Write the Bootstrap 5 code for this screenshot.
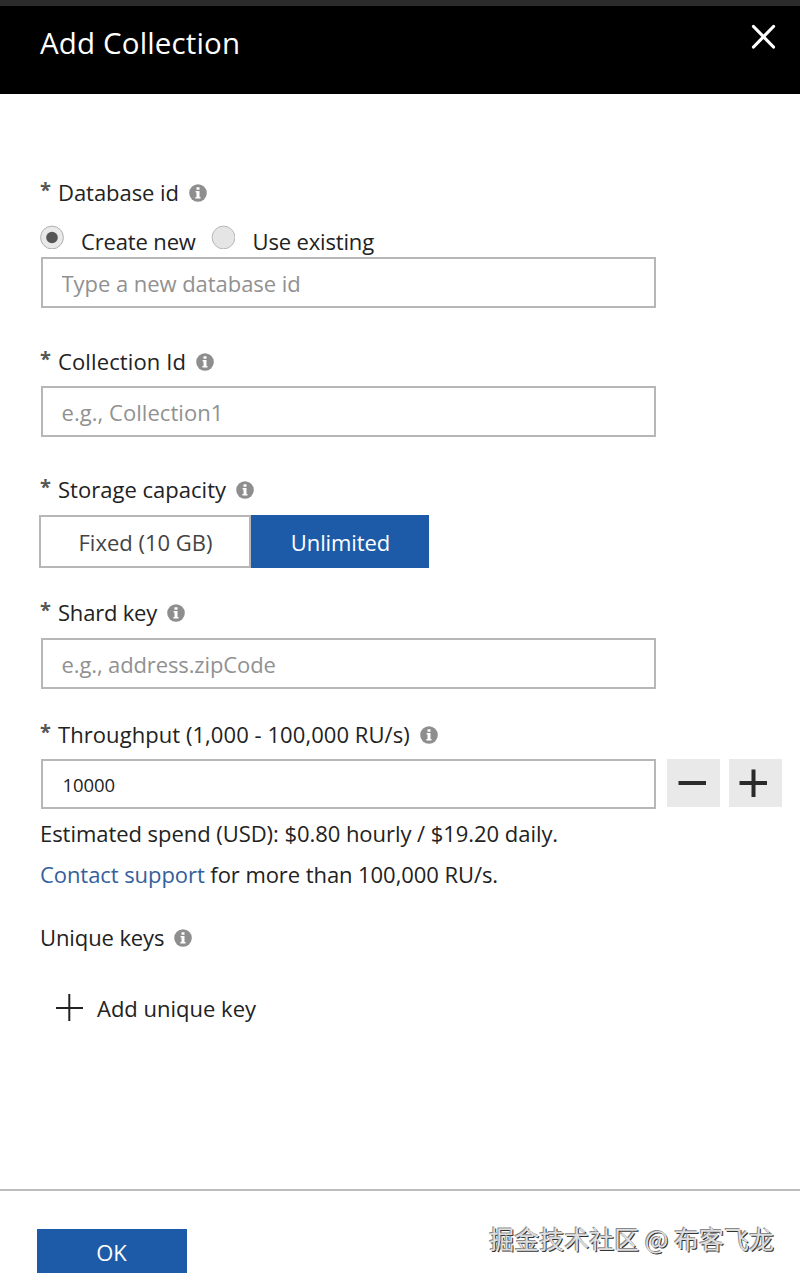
<!DOCTYPE html>
<html lang="en">
<head>
<meta charset="utf-8">
<meta name="viewport" content="width=device-width, initial-scale=1">
<title>Add Collection</title>
<link href="https://cdn.jsdelivr.net/npm/bootstrap@5.3.0/dist/css/bootstrap.min.css" rel="stylesheet">
<style>
  body { font-family: "Open Sans", "Noto Sans CJK SC", sans-serif; font-size: 22px; line-height: 30px; color: #222; letter-spacing: -.05px; }
  .blade { height: 1280px; overflow: hidden; }
  .blade-header { height: 94px; background: #000; border-top: 6px solid #2b2b2b; padding: 17px 24px 0 40px; }
  .blade-title { font-size: 29.5px; line-height: 40px; letter-spacing: .15px; }
  .blade-body { padding: 83px 18px 0 40px; height: 1095px; }
  .field-label { height: 30px; white-space: nowrap; }
  .req { width: 18px; font-size: 20px; font-weight: 700; color: #555; line-height: 30px; margin-top: -4px; }
  .info { width: 18px; height: 18px; margin: 2px 0 0 10px; }
  .field-input { width: 615px; height: 51px; margin-left: .5px; border: 2px solid #b7b7b7; border-radius: 0; padding: 0 19px 0; font-size: 22px; line-height: 30px; color: #222; letter-spacing: inherit; }
  .field-input::placeholder { color: #919191; opacity: 1; }
  .qty { height: 50px; font-size: 18.5px; padding: 0 20px; letter-spacing: -.1px; }
  .step-btn { width: 53px; height: 48px; background: #e9e9e9; border-radius: 0; }
  .radio-dot { width: 24px; height: 24px; margin-top: -1px; }
  .toggle-opt { height: 53px; border-radius: 0; font-size: 22px; line-height: 30px; padding: 1px 0 0 1px; letter-spacing: 0; }
  .opt-off { width: 212px; border: 2px solid #b7b7b7; color: #444; padding-top: 0; }
  .opt-on { width: 178px; background: #1d5ba8; color: #fff; border: 0; letter-spacing: -.09px; }
  .support-link { color: #34609c; text-decoration: none; }
  .blade-footer { border-top: 2px solid #bdbdbd; height: 91px; padding: 38px 26px 0 36.5px; }
  .ok-btn { width: 150px; height: 44px; background: #1d5ba8; color: #fff; border: 0; border-radius: 0; font-size: 22px; line-height: 30px; padding: 1px 0 0; }
  .watermark { font-size: 25px; line-height: 36px; letter-spacing: 0; color: #dedede; text-shadow: -1px -1px 0 #8a8a8a, 1px 1px 0 #333; font-family: "Noto Sans CJK SC", sans-serif; margin-top: -9px; white-space: nowrap; }
</style>
</head>
<body class="bg-white">
<svg class="d-none" xmlns="http://www.w3.org/2000/svg">
  <symbol id="i-info" viewBox="0 0 18 18">
    <circle cx="9" cy="9" r="8.8" fill="#8e8e8e"/>
    <path d="M7.5 3.2h3v2.5h-3zM6.6 7h3.9v6h1v1.6H6.4V13h1.1V8.6h-.9z" fill="#fff"/>
  </symbol>
</svg>
<div class="blade d-flex flex-column">
  <header class="blade-header d-flex justify-content-between align-items-start text-white">
    <h1 class="blade-title fw-normal m-0">Add Collection</h1>
    <button class="btn p-0 border-0 d-flex" aria-label="Close" type="button">
      <svg width="25" height="25" viewBox="0 0 25 25" style="margin-top:1px"><path d="M2.5 2.5 22.5 23M22.5 2.5 2.5 23" stroke="#fff" stroke-width="3.2" stroke-linecap="round"/></svg>
    </button>
  </header>

  <main class="blade-body">
    <div class="field-label d-flex align-items-center">
      <span class="req">*</span><span>Database id</span><svg class="info"><use href="#i-info"/></svg>
    </div>
    <div class="d-flex" style="margin-top:19px;height:31px">
      <svg class="radio-dot" viewBox="0 0 24 24"><circle cx="12" cy="12.5" r="11.4" fill="#e9e9e9" stroke="#b0b0b0"/><circle cx="12" cy="12.5" r="5.8" fill="#555"/></svg>
      <span style="margin-left:17px;width:130px;letter-spacing:-.15px">Create new</span>
      <svg class="radio-dot" viewBox="0 0 24 24"><circle cx="12.5" cy="12.5" r="11.4" fill="#e5e5e5" stroke="#b8b8b8"/></svg>
      <span style="margin-left:17.5px;letter-spacing:-.16px">Use existing</span>
    </div>
    <input class="form-control field-input" placeholder="Type a new database id">

    <div class="field-label d-flex align-items-center" style="margin-top:38px">
      <span class="req">*</span><span style="letter-spacing:.12px">Collection Id</span><svg class="info"><use href="#i-info"/></svg>
    </div>
    <input class="form-control field-input" style="margin-top:10px;letter-spacing:.05px" placeholder="e.g., Collection1">

    <div class="field-label d-flex align-items-center" style="margin-top:37px">
      <span class="req">*</span><span style="letter-spacing:.02px">Storage capacity</span><svg class="info"><use href="#i-info"/></svg>
    </div>
    <div class="d-flex" style="margin:11px 0 0 -1px">
      <button class="btn toggle-opt opt-off" type="button">Fixed (10 GB)</button>
      <button class="btn toggle-opt opt-on" type="button">Unlimited</button>
    </div>

    <div class="field-label d-flex align-items-center" style="margin-top:29px">
      <span class="req">*</span><span style="letter-spacing:-.2px">Shard key</span><svg class="info"><use href="#i-info"/></svg>
    </div>
    <input class="form-control field-input" style="margin-top:11px;letter-spacing:-.12px" placeholder="e.g., address.zipCode">

    <div class="field-label d-flex align-items-center" style="margin-top:30px">
      <span class="req">*</span><span style="letter-spacing:.06px">Throughput (1,000 - 100,000 RU/s)</span><svg class="info"><use href="#i-info"/></svg>
    </div>
    <div class="d-flex" style="margin-top:10px">
      <input class="form-control field-input qty flex-shrink-0" value="10000">
      <button class="btn step-btn p-0 border-0 d-flex justify-content-center flex-shrink-0" style="margin-left:11.5px" type="button" aria-label="Decrease">
        <svg width="53" height="48"><path d="M11.5 24h27.5" stroke="#2a2a2a" stroke-width="4"/></svg>
      </button>
      <button class="btn step-btn p-0 border-0 d-flex justify-content-center flex-shrink-0" style="margin-left:9px" type="button" aria-label="Increase">
        <svg width="53" height="48"><path d="M10.5 24h27.5M24.5 10.5V38" stroke="#2a2a2a" stroke-width="4"/></svg>
      </button>
    </div>
    <div style="margin-top:9px">Estimated spend (USD): $0.80 hourly / $19.20 daily.</div>
    <div style="margin-top:11px;letter-spacing:-.07px"><a class="support-link" href="#">Contact support</a> for more than 100,000 RU/s.</div>

    <div class="field-label d-flex align-items-center" style="margin-top:33px">
      <span style="letter-spacing:-.1px">Unique keys</span><svg class="info"><use href="#i-info"/></svg>
    </div>
    <div class="d-flex" style="margin-top:41px;padding-left:15px">
      <svg width="29" height="28"><path d="M1 15h27M14.3 1v27" stroke="#222" stroke-width="2"/></svg>
      <span style="margin-left:13px;letter-spacing:0">Add unique key</span>
    </div>
  </main>

  <footer class="blade-footer d-flex justify-content-between align-items-start">
    <button class="btn ok-btn" type="button">OK</button>
    <div class="watermark">掘金技术社区 @ 布客飞龙</div>
  </footer>
</div>
<script src="https://cdn.jsdelivr.net/npm/bootstrap@5.3.0/dist/js/bootstrap.bundle.min.js"></script>
</body>
</html>
